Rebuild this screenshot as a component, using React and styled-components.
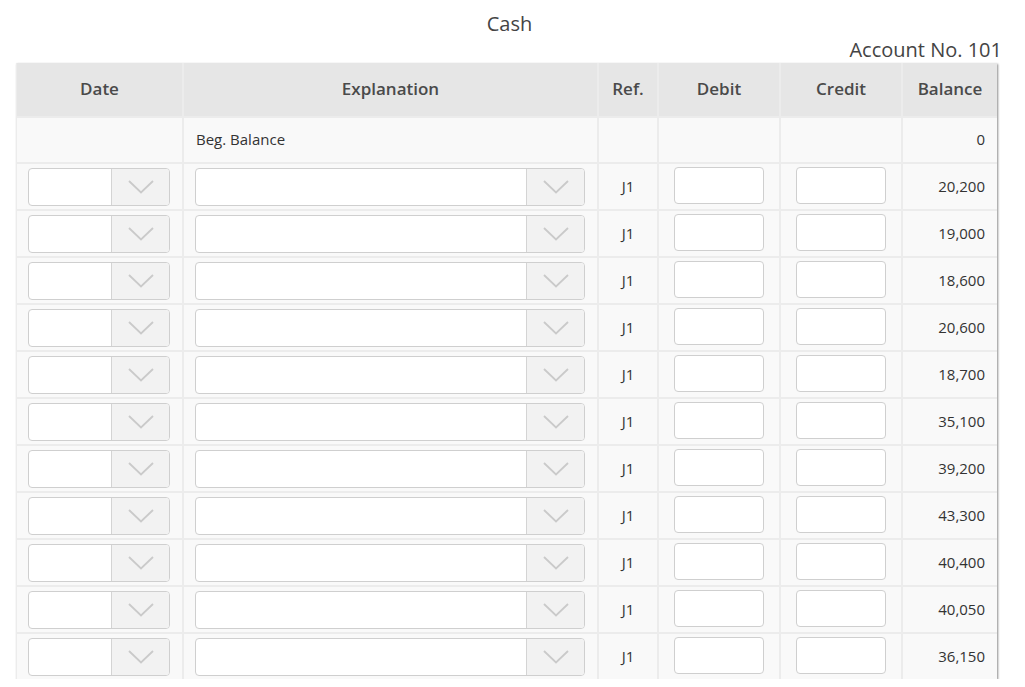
import React from 'react';
import styled, { createGlobalStyle } from 'styled-components';

const GlobalStyle = createGlobalStyle`
  body {
    margin: 0;
    background: #fff;
    font-family: 'Open Sans', 'Noto Sans', sans-serif;
    color: #333;
  }
`;

const balances = [20200, 19000, 18600, 20600, 18700, 35100, 39200, 43300, 40400, 40050, 36150];

const Page = styled.div`
  width: 987px;
  margin-left: 16px;
  padding-top: 10px;
`;

const Title = styled.div`
  font-size: 20px;
  line-height: 27px;
  text-align: center;
  color: #444;
`;

const AccountNo = styled.div`
  font-size: 20px;
  line-height: 26px;
  text-align: right;
  padding-right: 1px;
  color: #444;
`;

const Ledger = styled.div`
  width: 981px;
  box-sizing: border-box;
  display: grid;
  grid-template-columns: 165px 413px 58px 120px 120px 94px;
  grid-template-rows: 53px 44px repeat(11, 45px);
  gap: 2px;
  padding-left: 1px;
  background: #ececec;
  box-shadow: 1px 1px 2px rgba(0, 0, 0, 0.45);
`;

const HeadCell = styled.div`
  background: #e6e6e6;
  display: flex;
  align-items: center;
  justify-content: center;
  padding-bottom: 2px;
  font-size: 17px;
  font-weight: 600;
  color: #4a4a4a;
`;

const Cell = styled.div`
  background: #f9f9f9;
  display: flex;
  align-items: center;
  justify-content: ${(p) => (p.$align === 'right' ? 'flex-end' : p.$align === 'center' ? 'center' : 'flex-start')};
  padding: ${(p) => (p.$pad ? '0 12px 0 11px' : '0 12px 2px')};
  font-size: 15px;
  color: #333;
`;

const Select = styled.div`
  width: 100%;
  height: 38px;
  box-sizing: border-box;
  display: flex;
  border: 1px solid #cfcfcf;
  border-radius: 4px;
  background: #fff;
  overflow: hidden;
`;

const SelectValue = styled.div`
  flex: 1;
`;

const SelectArrow = styled.div`
  width: 57px;
  border-left: 1px solid #d4d4d4;
  background: #f2f2f2;
  display: flex;
  align-items: center;
  justify-content: center;
`;

const Input = styled.div`
  width: 90px;
  height: 37px;
  box-sizing: border-box;
  border: 1px solid #cfcfcf;
  border-radius: 4px;
  background: #fff;
`;

const Chevron = () => (
  <svg width="26" height="14" viewBox="0 0 26 14">
    <polyline points="1,1 13,12.5 25,1" fill="none" stroke="#cacaca" strokeWidth="1.8" />
  </svg>
);

const Dropdown = () => (
  <Select>
    <SelectValue />
    <SelectArrow>
      <Chevron />
    </SelectArrow>
  </Select>
);

export default function App() {
  return (
    <Page>
      <GlobalStyle />
      <Title>Cash</Title>
      <AccountNo>Account No. 101</AccountNo>
      <Ledger>
        <HeadCell>Date</HeadCell>
        <HeadCell>Explanation</HeadCell>
        <HeadCell>Ref.</HeadCell>
        <HeadCell>Debit</HeadCell>
        <HeadCell>Credit</HeadCell>
        <HeadCell>Balance</HeadCell>

        <Cell />
        <Cell>Beg. Balance</Cell>
        <Cell />
        <Cell />
        <Cell />
        <Cell $align="right">0</Cell>

        {balances.map((b, i) => (
          <React.Fragment key={i}>
            <Cell $pad>
              <Dropdown />
            </Cell>
            <Cell $pad>
              <Dropdown />
            </Cell>
            <Cell $align="center">J1</Cell>
            <Cell $align="center">
              <Input />
            </Cell>
            <Cell $align="center">
              <Input />
            </Cell>
            <Cell $align="right">{b.toLocaleString('en-US')}</Cell>
          </React.Fragment>
        ))}
      </Ledger>
    </Page>
  );
}
